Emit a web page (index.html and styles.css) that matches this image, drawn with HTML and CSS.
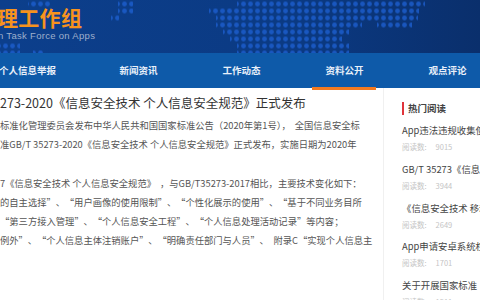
FILE: index.html
```html
<!DOCTYPE html>
<html lang="zh">
<head>
<meta charset="utf-8">
<link rel="stylesheet" href="styles.css">
</head>
<body>
<header class="banner">
  <svg class="dots" width="480" height="53" viewBox="0 0 480 53" aria-hidden="true">
    <defs>
      <pattern id="dp" x="2" y="0.5" width="7" height="7" patternUnits="userSpaceOnUse">
        <circle cx="3.5" cy="3.5" r="2.4" fill="#1d5fd0"/>
      </pattern>
      <linearGradient id="bg" x1="0" y1="0" x2="1" y2="0">
        <stop offset="0" stop-color="#0c3f8c"/>
        <stop offset="0.6" stop-color="#0b3a83"/>
        <stop offset="1" stop-color="#0a2f6c"/>
      </linearGradient>
    </defs>
    <rect width="480" height="53" fill="url(#bg)"/>
    <g fill="url(#dp)" opacity="0.8">
      <rect x="237" y="0" width="188" height="8"/>
      <rect x="209" y="7" width="210" height="7"/>
      <rect x="216" y="14" width="202" height="7"/>
      <rect x="216" y="21" width="146" height="7"/>
      <rect x="377" y="21" width="35" height="7"/>
      <rect x="223" y="28" width="126" height="7"/>
      <rect x="230" y="35" width="112" height="7"/>
      <rect x="237" y="42" width="112" height="11"/>
      <rect x="28" y="0" width="22" height="7"/>
      <rect x="118" y="0" width="15" height="14"/>
      <rect x="111" y="14" width="8" height="7"/>
      <rect x="0" y="42" width="20" height="11"/>
      <rect x="33" y="49" width="12" height="4"/>
    </g>
  </svg>
  <div class="brand">
    <div class="brand-cn">理工作组</div>
    <div class="brand-en">n Task Force on Apps</div>
  </div>
</header>
<nav class="nav">
  <a class="nav-item first">个人信息举报</a>
  <a class="nav-item">新闻资讯</a>
  <a class="nav-item">工作动态</a>
  <a class="nav-item active">资料公开</a>
  <a class="nav-item">观点评论</a>
</nav>
<div class="page">
  <main class="article">
    <h1 class="title">273-2020《信息安全技术 个人信息安全规范》正式发布</h1>
    <p class="para">标准化管理委员会发布中华人民共和国国家标准公告（2020年第1号），<span class="gap"></span>全国信息安全标<br>准GB/T 35273-2020《信息安全技术 个人信息安全规范》正式发布，实施日期为2020年</p>
    <p class="para">7《信息安全技术 个人信息安全规范》<span class="gap"></span>，与GB/T35273-2017相比，主要技术变化如下：<br>的自主选择”<span class="dun">、</span>“用户画像的使用限制”<span class="dun">、</span>“个性化展示的使用”<span class="dun">、</span>“基于不同业务目所<br>“第三方接入管理”<span class="dun">、</span>“个人信息安全工程”<span class="dun">、</span>“个人信息处理活动记录”等内容；<br>例外”<span class="dun">、</span>“个人信息主体注销账户”<span class="dun">、</span>“明确责任部门与人员”<span class="dun">、</span>附录C“实现个人信息主</p>
  </main>
  <aside class="side">
    <h2 class="side-title">热门阅读</h2>
    <ul class="hot">
      <li><div class="hot-t">App违法违规收集使用个人信息</div><div class="hot-n">阅读数:<span>9015</span></div></li>
      <li><div class="hot-t">GB/T 35273《信息安全技术</div><div class="hot-n">阅读数:<span>3944</span></div></li>
      <li><div class="hot-t">《信息安全技术 移动互联网</div><div class="hot-n">阅读数:<span>2649</span></div></li>
      <li><div class="hot-t">App申请安卓系统权限机制</div><div class="hot-n">阅读数:<span>1701</span></div></li>
      <li><div class="hot-t">关于开展国家标准《信息安全</div><div class="hot-n">阅读数:<span>1511</span></div></li>
    </ul>
  </aside>
</div>
</body>
</html>
```
FILE: styles.css
```css
* { box-sizing: border-box; }
html, body { margin: 0; padding: 0; }
body {
  width: 480px;
  height: 300px;
  overflow: hidden;
  background: #fff;
  font-family: "Noto Sans CJK SC", "Noto Sans", sans-serif;
  color: #333;
}
.banner {
  position: relative;
  height: 53px;
  overflow: hidden;
}
.dots { display: block; }
.brand {
  position: absolute;
  left: -3px;
  top: 5px;
}
.brand-cn {
  font-size: 21px;
  font-weight: 700;
  color: #f7931e;
  line-height: 24px;
  letter-spacing: 0.3px;
}
.brand-en {
  font-family: "Liberation Sans", Arial, sans-serif;
  font-size: 9.5px;
  color: #9fb0cc;
  line-height: 11px;
  margin-left: 1px;
  margin-top: 1px;
  letter-spacing: 0.3px;
}
.nav {
  display: flex;
  height: 35px;
  background: #0e5aa9;
  margin-left: -16px;
}
.nav-item {
  width: 103px;
  flex: none;
  text-align: center;
  color: #e8f0fa;
  font-size: 9.5px;
  font-weight: 700;
  line-height: 35px;
  position: relative;
}
.nav-item.first { text-indent: -16px; }
.nav-item.active::after {
  content: "";
  position: absolute;
  left: 19px;
  right: 20px;
  bottom: -2px;
  height: 3px;
  background: #f47a20;
}
.page {
  display: flex;
}
.article {
  width: 383px;
  flex: none;
  padding-top: 6px;
  overflow: hidden;
}
.title {
  margin: 0 0 4px;
  font-size: 12.5px;
  font-weight: 400;
  color: #333;
  line-height: 18px;
  white-space: nowrap;
}
.para {
  margin: 0 0 21px;
  font-size: 9.3px;
  color: #555;
  line-height: 18.7px;
  white-space: nowrap;
}
.gap { display: inline-block; width: 4px; }
.dun { margin: 0 4.5px; }
.side {
  flex: 1;
  border-left: 1px solid #f0f0f0;
  padding: 14px 0 0 18px;
  overflow: hidden;
  white-space: nowrap;
}
.side-title {
  margin: 0 0 5px;
  font-size: 9.5px;
  font-weight: 700;
  color: #444;
  line-height: 13px;
  border-left: 2px solid #e0343b;
  padding-left: 4px;
}
.hot {
  list-style: none;
  margin: 0;
  padding: 0;
}
.hot li { height: 38.8px; }
.hot-t {
  font-size: 9.4px;
  color: #444;
  line-height: 20px;
}
.hot-n {
  font-size: 7.5px;
  color: #c4c4c4;
  line-height: 14px;
}
.hot-n span { margin-left: 9px; }
```
